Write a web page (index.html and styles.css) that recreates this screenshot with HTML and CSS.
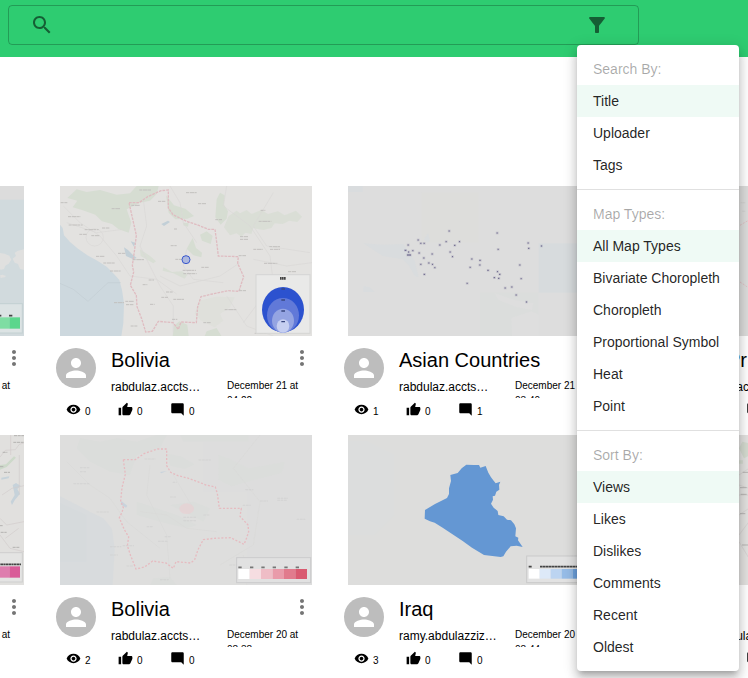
FILE: index.html
```html
<!DOCTYPE html>
<html lang="en">
<head>
<meta charset="utf-8">
<meta name="viewport" content="width=device-width, initial-scale=1">
<title>Maps</title>
<link rel="stylesheet" href="styles.css">
</head>
<body>
<svg class="sprite" aria-hidden="true">
  <symbol id="i-search" viewBox="0 0 24 24"><path d="M15.5 14h-.79l-.28-.27C15.41 12.59 16 11.11 16 9.5 16 5.91 13.09 3 9.5 3S3 5.91 3 9.5 5.91 16 9.5 16c1.61 0 3.09-.59 4.23-1.57l.27.28v.79l5 4.99L20.49 19l-4.99-5zm-6 0C7.01 14 5 11.99 5 9.5S7.01 5 9.5 5 14 7.01 14 9.5 11.99 14 9.5 14z"/></symbol>
  <symbol id="i-filter" viewBox="0 0 24 24"><path d="M4.25 5.61C6.27 8.2 10 13 10 13v6c0 .55.45 1 1 1h2c.55 0 1-.45 1-1v-6s3.72-4.8 5.74-7.39c.51-.66.04-1.61-.79-1.61H5.04c-.83 0-1.3.95-.79 1.61z"/></symbol>
  <symbol id="i-person" viewBox="0 0 24 24"><path d="M12 12c2.21 0 4-1.79 4-4s-1.79-4-4-4-4 1.790-4 4 1.790 4 4 4zm0 2c-2.670 0-8 1.340-8 4v2h16v-2c0-2.660-5.330-4-8-4z"/></symbol>
  <symbol id="i-more" viewBox="0 0 24 24"><path d="M12 8c1.100 0 2-.9 2-2s-.9-2-2-2-2 .9-2 2 .9 2 2 2zm0 2c-1.100 0-2 .9-2 2s.9 2 2 2 2-.9 2-2-.9-2-2-2zm0 6c-1.100 0-2 .9-2 2s.9 2 2 2 2-.9 2-2-.9-2-2-2z"/></symbol>
  <symbol id="i-eye" viewBox="0 0 24 24"><path d="M12 4.500C7 4.500 2.730 7.610 1 12c1.730 4.390 6 7.500 11 7.500s9.270-3.110 11-7.500c-1.730-4.390-6-7.500-11-7.500zM12 17c-2.760 0-5-2.240-5-5s2.240-5 5-5 5 2.240 5 5-2.240 5-5 5zm0-8c-1.660 0-3 1.340-3 3s1.340 3 3 3 3-1.340 3-3-1.340-3-3-3z"/></symbol>
  <symbol id="i-like" viewBox="0 0 24 24"><path d="M1 21h4V9H1v12zm22-11c0-1.100-.9-2-2-2h-6.310l.95-4.570.03-.32c0-.41-.17-.79-.44-1.060L14.170 1 7.590 7.590C7.220 7.950 7 8.450 7 9v10c0 1.100.9 2 2 2h9c.83 0 1.540-.5 1.840-1.220l3.020-7.050c.09-.23.14-.47.14-.73v-2z"/></symbol>
  <symbol id="i-comment" viewBox="0 0 24 24"><path d="M21.990 4c0-1.100-.89-2-1.990-2H4c-1.100 0-2 .9-2 2v12c0 1.100.9 2 2 2h14l4 4-.01-18z"/></symbol>
</svg>

<header class="topbar">
  <div class="search">
    <button class="icon-button" type="button" aria-label="Search"><svg class="icon"><use href="#i-search"/></svg></button>
    <input class="search-input" type="text" aria-label="Search maps">
    <button class="icon-button" type="button" aria-label="Filter" aria-expanded="true"><svg class="icon"><use href="#i-filter"/></svg></button>
  </div>
  <div class="menu" role="menu">
    <div class="menu-group">
      <p class="menu-label">Search By:</p>
      <button class="menu-item selected" type="button" role="menuitem">Title</button>
      <button class="menu-item" type="button" role="menuitem">Uploader</button>
      <button class="menu-item" type="button" role="menuitem">Tags</button>
    </div>
    <div class="menu-group">
      <p class="menu-label">Map Types:</p>
      <button class="menu-item selected" type="button" role="menuitem">All Map Types</button>
      <button class="menu-item" type="button" role="menuitem">Bivariate Choropleth</button>
      <button class="menu-item" type="button" role="menuitem">Choropleth</button>
      <button class="menu-item" type="button" role="menuitem">Proportional Symbol</button>
      <button class="menu-item" type="button" role="menuitem">Heat</button>
      <button class="menu-item" type="button" role="menuitem">Point</button>
    </div>
    <div class="menu-group">
      <p class="menu-label">Sort By:</p>
      <button class="menu-item selected" type="button" role="menuitem">Views</button>
      <button class="menu-item" type="button" role="menuitem">Likes</button>
      <button class="menu-item" type="button" role="menuitem">Dislikes</button>
      <button class="menu-item" type="button" role="menuitem">Comments</button>
      <button class="menu-item" type="button" role="menuitem">Recent</button>
      <button class="menu-item" type="button" role="menuitem">Oldest</button>
    </div>
  </div>
</header>

<main class="gallery">
  <div class="grid">

    <article class="card">
      <svg class="map" viewBox="0 0 756 450" aria-hidden="true">
        <rect width="756" height="450" fill="#d1dadd"/>
        <rect width="756" height="41" fill="#dcdcdc"/>
        <path fill="#e0e0df" d="M660 206l20-6 18 3 14 6 6 12-8 12-10 6-4 10-10 2-12-6zM728 200l10-6 18-4v62l-12-4-6-14-10-4-6-12 10-8zM684 268l8-2 10 4-4 4-12 2z"/>
        <rect x="560" y="353" width="191" height="88" fill="#dce3e4" stroke="#c3d0d2" stroke-width="3"/>
        <rect x="640" y="394" width="72" height="34" fill="#7fdda3"/><rect x="712" y="394" width="32" height="34" fill="#5bd68c"/>
        <path stroke="#444" stroke-width="5" d="M670 389h18M711 389h10"/>
      </svg>
      <div class="info">
        <span class="avatar"><svg><use href="#i-person"/></svg></span>
        <div class="details">
          <div class="heading"><button class="more" type="button" aria-label="More"><svg class="icon"><use href="#i-more"/></svg></button></div>
          <div class="meta"><span class="user"></span><time class="date">December 21 at</time></div>
        </div>
      </div>
    </article>

    <article class="card">
      <svg class="map" viewBox="0 0 756 450" aria-hidden="true">
        <rect width="756" height="450" fill="#e3e2e0"/>
        <path fill="#cdd8de" d="M0 116l8 10 4 22 18 20 24 20 28 20 30 16 28 18 24 24 14 16 8 30 6 40-2 60-6 38H0z"/>
        <g fill="#d6ddd2">
          <path d="M50 10l30 8 40-6 50 14 40-4 20-22h66l-6 24-20 20-30 6-40 20 14 40-8 30-30-10-20-16-30-8-20-20-40-14-28-8 14-20-30-8z"/>
          <path d="M318 28l24 30 34 10 26 22-20 8-36 2-20-20z"/><path d="M470 40l10-20 14 8-2 28 12 20-4 22-18 18-16-22z"/>
          <path d="M506 90l24-16 10 8 20-10 14 12 30-12 20 12 30-8 20 12 34-14 18 18-14 16-24-4-20 10-24-2-10 14-24 6-30-6-6 18-18-4-12 12-14-10-20 6-10-14-8-10z" opacity=".7"/>
          <path d="M370 110l16 2-2 10-14-4zM420 146l20-10 18 14-6 24-26-10zM398 156l10 30 18 14-2 14-24-6-20-20z"/>
          <path d="M310 244l26 14 30-2 16 10-8 12-34-16-32-8zM240 190l30 20 18 16-8 6-38-22z" opacity=".8"/>
          <path d="M338 450l4-30 16-14 24 10 4 34zM440 436l30-10 14 24h-50z"/><path d="M418 344l50-12 56 2-14 30-30 20 10 20-26 20-40-20-20-20z" opacity=".35"/>
        </g>
        <g fill="#c2cfd7"><path d="M192 184l12 8 14 14 12 10-10 4-22-10zM304 114l20-10 6 4-18 12zM212 166l14 4-4 12z"/></g>
        <g fill="none" stroke="#dad8d6" stroke-width="2">
          <path d="M10 60l50 50 60 40 50 60 40 60 80 10 60 44M20 110l90 30 80-10M330 0l30 50 10 60 40 60M250 40l10 80-20 60 60 120 40 60 0 80M500 0l-10 60 80 60 60 90 10 80-90 120M640 20l-60 100 40 60 130 20M540 230l-60 40-120 30-60-30M380 190l-10 50 30 40 90 10M580 220l100 20 76-10M500 330l60 90 80 30"/>
          <circle cx="104" cy="154" r="26"/>
        </g>
        <path fill="none" stroke="#c2cdd3" stroke-width="2" d="M0 292l40 18 44 36 60-56 38 0"/>
        <path fill="none" stroke="#dfbcc1" stroke-width="4" stroke-dasharray="8 3" d="M207 50h30l26-18 40-18 22-2v54l14 20 28 14 18 8 26 8 34 14h20l4 30 6 50 60 2-2 20 18 40-8 24-6 20-32-2-48 10-34 8-10 30-4 48-46-2-8 22-16-20-44-4-18 30-20 2-12-40-14-36-2-34-18-30 10-40-4-20 6-40 6-50z"/>
        <path fill="none" stroke="#c2c0be" stroke-width="3" stroke-dasharray="9 2 14 1" d="M238 12h36M378 20h32M2 50h20M155 68h26M214 58h26M294 46h22M24 92h38M26 117h42M74 131h42M126 126h22M58 145h22M94 149h24M108 211h26M130 231h34M150 255h32M174 202h22M414 53h24M466 101h20M602 73h14M596 106h38M540 152h24M540 160h24M580 190h28M628 182h32M630 190h30M536 209h22M612 232h40M684 257h24M342 129h10M332 179h18M346 220h30M368 253h40M370 263h40M424 244h22M266 282h16M318 318h20M304 334h20M340 340h32M248 296h14M270 355h14M162 350h30M196 346h26M198 356h22M212 420h20M336 400h16M430 410h22M494 371h36M538 314h20M584 442h36M218 221h34"/>
        <circle cx="378" cy="221" r="12" fill="#aeb9de" stroke="#3a58cd" stroke-width="3"/>
        <rect x="588" y="266" width="162" height="176" fill="#e9e9e8" stroke="#d5d5d4" stroke-width="3"/>
        <path stroke="#444" stroke-width="8" stroke-dasharray="5 1" d="M660 277h18"/>
        <ellipse cx="669" cy="371" rx="63" ry="68" fill="#2c52cf"/><ellipse cx="669" cy="388" rx="48" ry="52" fill="#6179d8"/><ellipse cx="669" cy="404" rx="33" ry="36" fill="#94a4e2"/><ellipse cx="669" cy="420" rx="19" ry="20" fill="#c6cff1"/>
        <path stroke="#39477f" stroke-width="4" d="M664 309h11M664 342h11M664 375h11M664 407h11"/>
      </svg>
      <div class="info">
        <span class="avatar"><svg><use href="#i-person"/></svg></span>
        <div class="details">
          <div class="heading"><h2 class="title">Bolivia</h2><button class="more" type="button" aria-label="More"><svg class="icon"><use href="#i-more"/></svg></button></div>
          <div class="meta"><span class="user">rabdulaz.accts…</span><time class="date">December 21 at 04:22</time></div>
        </div>
      </div>
      <ul class="stats"><li><svg><use href="#i-eye"/></svg>0</li><li><svg><use href="#i-like"/></svg>0</li><li><svg><use href="#i-comment"/></svg>0</li></ul>
    </article>

    <article class="card">
      <svg class="map" viewBox="0 0 756 450" aria-hidden="true">
        <rect width="756" height="450" fill="#dddddd"/>
        <path fill="#dddddb" d="M220 20h172v150H220z"/>
        <path fill="#d9dcde" d="M0 0h44v18H0zM46 172l60 4 60-2 14 20 20 30 12 50-12-4-16-30-20-20-60-10zM228 160l12-18 6 22-8 6zM46 300l20 4 14 14H46z"/>
        <path fill="#d7dbdd" d="M572 172h184v148H572z"/>
        <path fill="#dbdddc" d="M396 320h176v130H396z"/><path fill="#dedede" d="M440 322l60 20 56 10-4 20-50-10-50-20zM490 396l60-20 22 10v64h-80z"/>
        <path fill="none" stroke="#5d5685" stroke-opacity=".22" stroke-width="7" stroke-linecap="square" d="M210 162h1M180 177h1M218 172h1M228 172h1M172 193h1M182 198h1M194 194h1M179 207h8M213 201h1M227 216h1M252 204h1M218 235h1M242 231h1M253 235h1M260 245h1M229 265h1M303 135h1M294 167h1M275 177h1M334 167h1M320 178h1M306 198h1M313 212h1M371 219h1M396 223h1M395 237h1M366 244h1M357 292h1M420 253h1M447 141h1M450 190h1M448 257h1M455 265h1M439 275h1M452 277h1M471 306h1M491 303h1M504 327h1M535 348h1M515 237h1M519 278h1M540 171h1M542 187h1M580 180h1"/>
        <path fill="none" stroke="#474071" stroke-opacity=".75" stroke-width="3" d="M209 162h3M179 177h3M217 172h3M227 172h3M170 193h5M180 198h3M193 194h3M177 207h12M212 201h3M226 216h3M251 204h3M217 235h3M241 231h3M252 235h3M259 245h3M227 265h4M302 135h3M293 167h3M274 177h3M333 167h3M318 178h4M305 198h3M312 212h3M370 219h3M394 223h4M394 237h3M365 244h3M356 292h3M418 253h4M446 141h3M449 190h3M447 257h3M453 265h4M437 275h4M450 277h4M470 306h3M490 303h3M503 327h3M534 348h3M514 237h3M518 278h3M539 171h3M540 187h4M579 180h3"/>
      </svg>
      <div class="info">
        <span class="avatar"><svg><use href="#i-person"/></svg></span>
        <div class="details">
          <div class="heading"><h2 class="title">Asian Countries</h2><button class="more" type="button" aria-label="More"><svg class="icon"><use href="#i-more"/></svg></button></div>
          <div class="meta"><span class="user">rabdulaz.accts…</span><time class="date">December 21 at 03:40</time></div>
        </div>
      </div>
      <ul class="stats"><li><svg><use href="#i-eye"/></svg>1</li><li><svg><use href="#i-like"/></svg>0</li><li><svg><use href="#i-comment"/></svg>1</li></ul>
    </article>

    <article class="card">
      <svg class="map" viewBox="0 0 756 450" aria-hidden="true">
        <rect width="756" height="450" fill="#dddddc"/>
        <path fill="none" stroke="#e2bfc3" stroke-width="3" stroke-dasharray="6 4" d="M312 118l10-6 14-8M312 288l12 8 20 14"/>
        <path stroke="#cfcfcd" stroke-width="2" d="M314 50h14M318 76h10"/>
      </svg>
      <div class="info">
        <span class="avatar"><svg><use href="#i-person"/></svg></span>
        <div class="details">
          <div class="heading"><h2 class="title">Iraq Pr</h2></div>
          <div class="meta"><span class="user">rabdulaz.ac</span></div>
        </div>
      </div>
      <ul class="stats"><li><svg><use href="#i-eye"/></svg></li><li><svg><use href="#i-like"/></svg></li><li><svg><use href="#i-comment"/></svg></li></ul>
    </article>

    <article class="card">
      <svg class="map" viewBox="0 0 756 450" aria-hidden="true">
        <rect width="756" height="450" fill="#e1e0de"/>
        <path fill="#cdd9ca" d="M684 90l18-2 24-24 6 4-28 28-20 8z"/><path fill="#c6d2da" d="M722 150l10-6 14 8-10 10 8 14-16 20-8 14-4-10 12-20zM688 128l24-4-2 6-22 4z"/>
        <path fill="none" stroke="#d2cccc" stroke-width="2" d="M684 66l16-20 30-2 12-16 14-4M690 180l30-20 36-8M684 250l20 20 52-10M700 310l40-30M742 60v120M684 300l30 40 42 10M716 0v60"/>
        <path stroke="#b4b2b0" stroke-width="3" stroke-dasharray="9 2" d="M724 22h32M692 52h14M684 95h12M696 112h18M722 337h22M684 272h8M686 292h18M714 362h20M726 2h30"/>
        <rect x="560" y="353" width="191" height="88" fill="#e4e4e3" stroke="#cfcfce" stroke-width="3"/>
        <rect x="640" y="394" width="72" height="34" fill="#de7dae"/><rect x="712" y="394" width="32" height="34" fill="#d95b98"/>
        <path stroke="#444" stroke-width="5" stroke-dasharray="7 1" d="M670 388h77"/>
      </svg>
      <div class="info">
        <span class="avatar"><svg><use href="#i-person"/></svg></span>
        <div class="details">
          <div class="heading"><button class="more" type="button" aria-label="More"><svg class="icon"><use href="#i-more"/></svg></button></div>
          <div class="meta"><span class="user"></span><time class="date">December 20 at</time></div>
        </div>
      </div>
    </article>

    <article class="card">
      <svg class="map" viewBox="0 0 756 450" aria-hidden="true">
        <rect width="756" height="450" fill="#dededd"/><path fill="#dddddd" d="M430 0h326v450H560V170H430z"/>
        <path fill="#d8dbdd" d="M0 184l40 20 50 26 40 20 26 32 8 60-6 108H0z"/>
        <path fill="#d6dadc" d="M0 204l80 36v140H0z"/>
        <path fill="#dbdddb" d="M60 10l60 10 50-10 60 10 60-20h30l-20 40-70 20-20 60-60-10-60-30-40-40zM322 56l40 8 42 24-30 14-44-10zM360 0h206v20H370zM475 60l30 10 60 30 60-10 50-10-10 34-80 20-70 20-40-20zM230 200l60 20 60 20 60 30-30 10-80-20-70-20zM280 430l50-4 20 24h-80zM330 210l70-10 50 20-20 40-60-30z"/>
        <path fill="none" stroke="#d9d9d8" stroke-width="2" d="M20 80l70 70 60 40 50 70 100 80M270 90l-10 90 60 120 10 130M340 120l60 100M600 0l-80 100 80 100-20 130-100 60M240 230l80 10 60 40 90 10M550 360l10 90"/>
        <path fill="none" stroke="#cfcfcf" stroke-width="2" stroke-dasharray="8 2" d="M40 146h50M110 231h36M60 98h30M60 110h20M260 275h18M314 305h20M294 319h30M330 186h20M338 142h12M370 247h40M430 240h20M370 257h40M416 75h36M556 164h24M600 198h24M652 190h32M652 196h30M548 211h24M150 335h34M150 360h24M200 393h20M710 253h26M508 390h30M300 434h26M254 72h32M188 332h34"/>
        <path fill="#c9d3dc" d="M184 198l18 14-4 6-16-10zM300 111l20-3-16 7z"/>
        <path fill="none" stroke="#e6bbc0" stroke-width="4" stroke-dasharray="6 5" d="M190 74h36l26-18 40-14h28v50l12 20 22 10 32 8 32 12 20 8 28 6 6 20 6 44h66l-4 24 24 26 2 20-8 24-6 14-40-20-50 2-32 4-16 30-10 30-12 10-44-4-8 20-22-16-40-6-24 18-26 6-16-40-10-30 4-26-14-24-14-34 8-16 4-14-8-20 4-40 10-40z"/>
        <ellipse cx="380" cy="221" rx="22" ry="16" fill="#e8d0d3" opacity=".7"/>
        <rect x="530" y="368" width="222" height="75" fill="#e1e1e1" stroke="#cbcbcc" stroke-width="3"/>
        <path fill="#fff" d="M535 402h34v30h-34z"/><path fill="#f6dde1" d="M569 402h34v30h-34z"/><path fill="#efbdc6" d="M603 402h35v30h-35z"/><path fill="#e99baa" d="M638 402h34v30h-34z"/><path fill="#e17b8d" d="M672 402h34v30h-34z"/><path fill="#d95a70" d="M706 402h35v30h-35z"/>
        <path stroke="#777" stroke-width="5" d="M535 397h10M570 397h10M604 397h10M638 397h10M673 397h10M707 397h10"/>
      </svg>
      <div class="info">
        <span class="avatar"><svg><use href="#i-person"/></svg></span>
        <div class="details">
          <div class="heading"><h2 class="title">Bolivia</h2><button class="more" type="button" aria-label="More"><svg class="icon"><use href="#i-more"/></svg></button></div>
          <div class="meta"><span class="user">rabdulaz.accts…</span><time class="date">December 20 at 08:38</time></div>
        </div>
      </div>
      <ul class="stats"><li><svg><use href="#i-eye"/></svg>2</li><li><svg><use href="#i-like"/></svg>0</li><li><svg><use href="#i-comment"/></svg>0</li></ul>
    </article>

    <article class="card">
      <svg class="map" viewBox="0 0 756 450" aria-hidden="true">
        <rect width="756" height="450" fill="#dddddc"/><path fill="#dcdddd" d="M0 20h60l80 40v180l-60 60H0z"/>
        <path fill="#6497d3" d="M231 225l30-18 36-18 6-12V160l6-22-2-18 22-6 12-14 14-11 22 1h16l4 8 16-5 8 20 8 14 8 10 6 8 14-5-4 10 1 14-9 6-4 12-7 2 1 10-6 12 8 12 12 10 2 12 16 4 10 10 12 2 10 12 5 12-2 24 9 4-1 8 14 20-18-4-18 2-14 16-8 14-8 2-50-6-36-22-28-20-60-40-24-15-14-4-16-8z"/>
        <rect x="536" y="363" width="217" height="80" fill="#e2e2e2" stroke="#cacaca" stroke-width="3"/>
        <path fill="#fff" d="M542 402h33v29h-33z"/><path fill="#dde9f8" d="M575 402h33v29h-33z"/><path fill="#bcd4f1" d="M608 402h33v29h-33z"/><path fill="#96bce7" d="M641 402h33v29h-33z"/><path fill="#6da1dd" d="M674 402h70v29h-70z"/>
        <path stroke="#444" stroke-width="5" stroke-dasharray="8 1" d="M542 395h10M576 395h160"/>
      </svg>
      <div class="info">
        <span class="avatar"><svg><use href="#i-person"/></svg></span>
        <div class="details">
          <div class="heading"><h2 class="title">Iraq</h2><button class="more" type="button" aria-label="More"><svg class="icon"><use href="#i-more"/></svg></button></div>
          <div class="meta"><span class="user">ramy.abdulazziz…</span><time class="date">December 20 at 08:44</time></div>
        </div>
      </div>
      <ul class="stats"><li><svg><use href="#i-eye"/></svg>3</li><li><svg><use href="#i-like"/></svg>0</li><li><svg><use href="#i-comment"/></svg>0</li></ul>
    </article>

    <article class="card">
      <svg class="map" viewBox="0 0 756 450" aria-hidden="true">
        <rect width="756" height="450" fill="#e3e2e0"/>
        <path fill="#d5dbd0" d="M309 40l10-20 17 4v40l-12 6zM309 76h12v10h-12z"/>
        <path fill="none" stroke="#d3cfcd" stroke-width="2" d="M309 120l30-20M309 150l30 10M309 180h30M309 240l30-20M309 300l30-40M309 320l30 50"/>
        <path stroke="#b7b5b3" stroke-width="3" d="M320 112h16M312 158h20M314 178h18M312 236h16M318 330h18"/>
      </svg>
      <div class="info">
        <span class="avatar"><svg><use href="#i-person"/></svg></span>
        <div class="details">
          <div class="heading"></div>
          <div class="meta"><span class="user">ramy.abdula</span></div>
        </div>
      </div>
      <ul class="stats"><li><svg><use href="#i-eye"/></svg></li><li><svg><use href="#i-like"/></svg></li><li><svg><use href="#i-comment"/></svg></li></ul>
    </article>

  </div>
</main>
</body>
</html>
```
FILE: styles.css
```css
* { box-sizing: border-box; }

body {
  margin: 0;
  font-family: "Liberation Sans", Arial, sans-serif;
  color: #000;
  background: #fff;
}

button {
  font: inherit;
  color: inherit;
  border: 0;
  padding: 0;
  background: none;
  cursor: pointer;
}

svg { display: block; fill: currentColor; }

.sprite { display: none; }

.icon { width: 24px; height: 24px; }

/* Top bar */
.topbar {
  position: relative;
  z-index: 1;
  padding: 5px 109px 12px 8px;
  background: #2ecc71;
}

.search {
  display: flex;
  align-items: center;
  height: 40px;
  padding: 0 29px 0 21px;
  border: 1px solid rgba(0, 0, 0, 0.23);
  border-radius: 4px;
}

.icon-button { color: rgba(0, 0, 0, 0.54); }

.search-input {
  flex: 1;
  min-width: 0;
  margin: 0 12px;
  padding: 0;
  border: 0;
  outline: 0;
  background: transparent;
  font: inherit;
}

/* Filter menu */
.menu {
  position: absolute;
  top: 45px;
  right: 9px;
  width: 162px;
  padding: 8px 0;
  border-radius: 4px;
  background: #fff;
  color: rgba(0, 0, 0, 0.87);
  font-size: 14px;
  line-height: 32px;
  box-shadow: 0 5px 5px -3px rgba(0, 0, 0, 0.2),
    0 8px 10px 1px rgba(0, 0, 0, 0.14),
    0 3px 14px 2px rgba(0, 0, 0, 0.12);
}

.menu-group + .menu-group {
  margin-top: 8px;
  padding-top: 8px;
  border-top: 1px solid rgba(0, 0, 0, 0.12);
}

.menu-label {
  margin: 0;
  padding: 0 16px;
  color: rgba(0, 0, 0, 0.34);
}

.menu-item {
  display: block;
  width: 100%;
  height: 32px;
  padding: 0 16px;
  text-align: left;
  white-space: nowrap;
}

.menu-item.selected { background: #effaf5; }

/* Card gallery, scrolled one card to the left */
.gallery {
  padding: 129px 0 12px;
  overflow: hidden;
}

.grid {
  display: grid;
  grid-template-columns: repeat(4, 260px);
  gap: 18px 28px;
  margin-left: -232px;
}

.map {
  width: 252px;
  height: 150px;
  margin: 0 4px;
}

.info {
  display: flex;
  gap: 15px;
  padding: 12px 2px 0 0;
}

.avatar {
  flex: none;
  display: grid;
  place-items: center;
  width: 40px;
  height: 40px;
  border-radius: 50%;
  background: #bdbdbd;
  color: #fff;
}

.avatar svg { width: 30px; height: 30px; }

.details { flex: 1; min-width: 0; }

.heading { display: flex; height: 24px; }

.title {
  margin: 0;
  font-size: 20px;
  font-weight: 400;
  line-height: 24px;
}

.more {
  height: 24px;
  margin: -2px 0 0 auto;
  color: rgba(0, 0, 0, 0.54);
}

.meta {
  display: flex;
  height: 20px;
  margin-top: 6px;
  overflow: hidden;
}

.user {
  flex: none;
  width: 116px;
  font-size: 12px;
  line-height: 18px;
}

.date {
  width: 76px;
  font-size: 10px;
  line-height: 15px;
}

.stats {
  display: flex;
  margin: 4px 0 0;
  padding: 0 0 0 10px;
  list-style: none;
  font-size: 10px;
  line-height: 10px;
}

.stats li {
  display: flex;
  align-items: flex-end;
  gap: 4px;
  width: 52px;
}

.stats svg { width: 15px; height: 15px; }
```
